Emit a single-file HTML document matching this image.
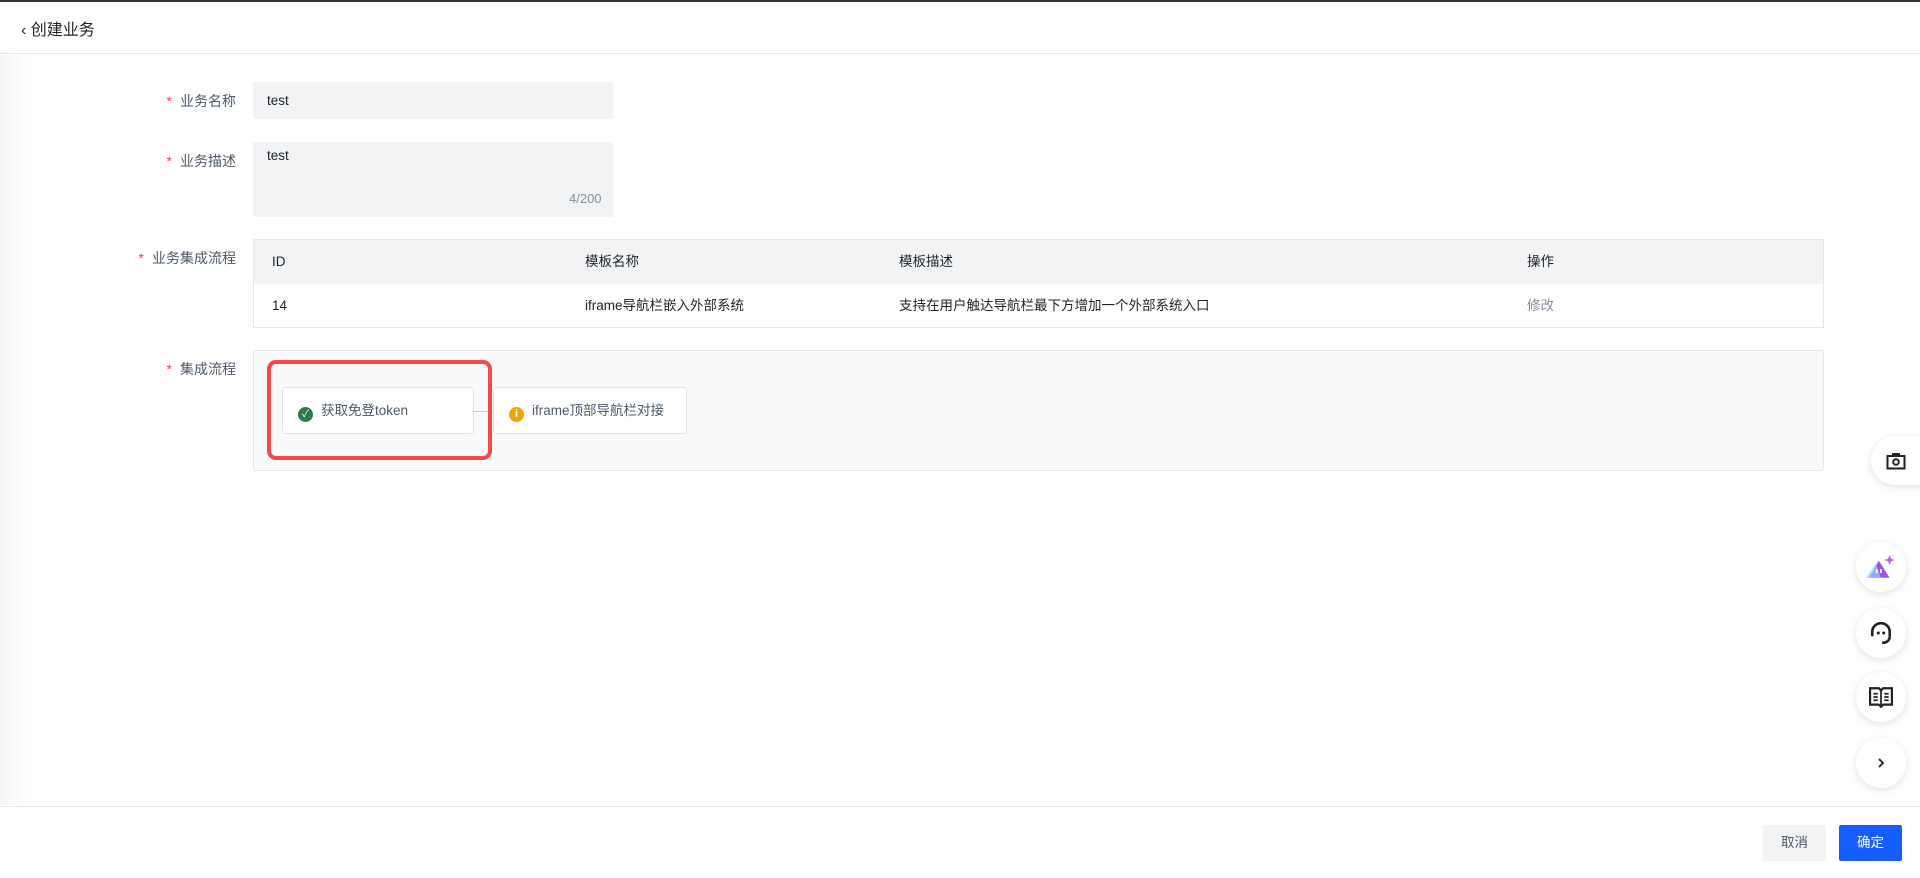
<!DOCTYPE html>
<html><head><meta charset="utf-8"><style>
*{box-sizing:border-box;margin:0;padding:0}
body{width:1920px;height:878px;background:#fff;font-family:"Liberation Sans","Noto Sans CJK SC",sans-serif;font-size:14px;color:#1f2329;position:relative;overflow:hidden}
.abs{position:absolute}
.top{left:0;top:0;width:1920px;height:2px;background:#333}
.hdr{left:0;top:2px;width:1920px;height:52px;border-bottom:1px solid #e5e6eb}
.title{left:21px;top:16px;font-size:16px;color:#1f2329}
.shadow{left:0;top:55px;width:30px;height:750px;background:linear-gradient(to right,#f5f6f7,#fff)}
.lbl{font-size:14px;color:#4e5969;text-align:right;width:200px}
.lbl b{color:#f53f3f;font-weight:normal;margin-right:8px}
.in{background:#f2f3f5;border-radius:2px;left:253px;width:360px;font-size:13.5px}
.tbl{left:253px;top:239px;width:1571px;height:89px;border:1px solid #e5e6eb}
.th{position:absolute;top:0;left:0;right:0;height:44px;background:#f2f3f5}
.tbl span{position:absolute;font-size:13.5px;height:44px;line-height:44px;top:0}
.tbl span.r{top:44px}
.panel{left:253px;top:350px;width:1571px;height:121px;background:#f9fafc;border:1px solid #e5e6eb;border-radius:3px}
.node{top:387px;height:47px;background:#fff;border:1px solid #e0e2e7;border-radius:3px;color:#4e5969;font-size:13.5px;line-height:45px}
.circ{left:1856px;width:50px;height:50px;border-radius:50%;background:#fff;box-shadow:0 2px 8px rgba(0,0,0,.12);display:flex;align-items:center;justify-content:center}
</style></head><body>
<div class="abs top"></div>
<div class="abs hdr"></div>
<div class="abs title">‹ 创建业务</div>
<div class="abs shadow"></div>

<div class="abs lbl" style="left:36px;top:91px"><b>*</b>业务名称</div>
<div class="abs in" style="top:82px;height:37px;padding:0 14px;line-height:37px">test</div>
<div class="abs lbl" style="left:36px;top:151px"><b>*</b>业务描述</div>
<div class="abs in" style="top:142px;height:75px;padding:6px 14px">test</div>
<div class="abs" style="left:569px;top:191px;color:#86909c;font-size:13px">4/200</div>
<div class="abs lbl" style="left:36px;top:248px"><b>*</b>业务集成流程</div>

<div class="abs tbl"><div class="th"></div>
<span style="left:18px">ID</span>
<span style="left:331px">模板名称</span>
<span style="left:645px">模板描述</span>
<span style="left:1273px">操作</span>
<span class="r" style="left:18px">14</span>
<span class="r" style="left:331px">iframe导航栏嵌入外部系统</span>
<span class="r" style="left:645px">支持在用户触达导航栏最下方增加一个外部系统入口</span>
<span class="r" style="left:1273px;color:#86909c">修改</span>
</div>

<div class="abs lbl" style="left:36px;top:359px"><b>*</b>集成流程</div>
<div class="abs panel"></div>
<div class="abs" style="left:474px;top:411px;width:19px;height:1px;background:#c9cdd4"></div>
<div class="abs node" style="left:282px;width:192px;padding-left:15px"><span style="display:inline-block;width:15px;height:15px;border-radius:50%;background:#2a7a4b;vertical-align:-2px;margin-right:8px;color:#fff;font-size:10px;line-height:15px;text-align:center">✓</span>获取免登token</div>
<div class="abs node" style="left:493px;width:194px;padding-left:15px"><span style="display:inline-block;width:15px;height:15px;border-radius:50%;background:#f0a30a;vertical-align:-2px;margin-right:8px;color:#fff;font-size:11px;font-weight:bold;line-height:15px;text-align:center">i</span>iframe顶部导航栏对接</div>
<div class="abs" style="left:267px;top:360px;width:225px;height:100px;border:4px solid #f54848;border-radius:9px"></div>

<div class="abs" style="left:1871px;top:436px;width:60px;height:49px;border-radius:25px 0 0 25px;background:#fff;box-shadow:0 2px 8px rgba(0,0,0,.12);display:flex;align-items:center;padding-left:15px">
<svg width="20" height="18" viewBox="0 0 20 18"><rect x="1.5" y="4" width="17" height="12.5" fill="none" stroke="#222" stroke-width="2"/><rect x="6" y="1" width="8" height="3" fill="#222"/><circle cx="10" cy="10" r="2.8" fill="none" stroke="#222" stroke-width="2"/></svg></div>
<div class="abs circ" style="top:542px"><svg width="30" height="26" viewBox="0 0 28 24"><path d="M3 22L12 6L22 22Z" fill="#a24dea"/><path d="M0 22L9 9L14 22Z" fill="#8fd0ff" opacity=".7"/><rect x="9" y="14" width="1.8" height="3.5" fill="#fff"/><rect x="13" y="14" width="1.8" height="3.5" fill="#fff"/><path d="M22 1L23.4 4.4L27 5.5L23.4 6.6L22 10L20.6 6.6L17 5.5L20.6 4.4Z" fill="#c05af0"/></svg></div>
<div class="abs circ" style="top:608px"><svg width="24" height="24" viewBox="0 0 22 22"><path d="M3 14V10a8 8 0 0116 0v4" fill="none" stroke="#222" stroke-width="2.4"/><path d="M19 14c0 4-3 6-7 6" fill="none" stroke="#222" stroke-width="2.4"/><circle cx="8.5" cy="11" r="1.4" fill="#222"/><circle cx="13.5" cy="11" r="1.4" fill="#222"/></svg></div>
<div class="abs circ" style="top:672px"><svg width="24" height="22" viewBox="0 0 22 20"><path d="M1 2h8l2 2 2-2h8v15h-8l-2 2-2-2H1Z" fill="none" stroke="#222" stroke-width="2"/><path d="M11 4v14M4 7h4M4 10h4M4 13h4M14 7h4M14 10h4M14 13h4" stroke="#222" stroke-width="1.6"/></svg></div>
<div class="abs circ" style="top:738px"><svg width="12" height="12" viewBox="0 0 12 12"><path d="M4 2l4 4-4 4" fill="none" stroke="#333" stroke-width="2"/></svg></div>

<div class="abs" style="left:0;top:806px;width:1920px;height:1px;background:#e5e6eb"></div>
<div class="abs" style="left:1763px;top:825px;width:63px;height:36px;background:#f2f3f5;border-radius:2px;text-align:center;line-height:36px;color:#4e5969;font-size:13.5px">取消</div>
<div class="abs" style="left:1839px;top:825px;width:63px;height:36px;background:#165dff;border-radius:2px;text-align:center;line-height:36px;color:#fff;font-size:13.5px">确定</div>
</body></html>
